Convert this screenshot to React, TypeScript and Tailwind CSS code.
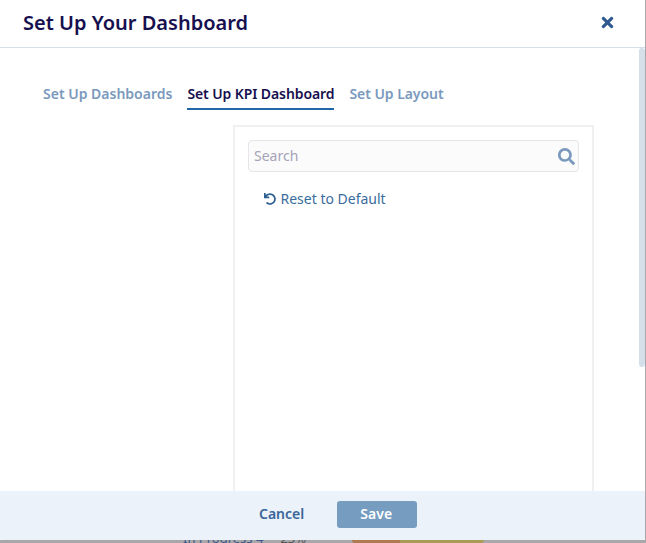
import React from 'react';
import { FaTimes, FaSearch, FaUndo } from 'react-icons/fa';

const font = "font-['Noto_Sans','Open_Sans',sans-serif]";

const App: React.FC = () => {
  return (
    <div className={`w-[646px] h-[543px] overflow-hidden bg-[#a9a7a9] flex flex-col ${font}`}>
      <div className="w-[645px] h-[540px] shrink-0 bg-white flex flex-col">
        <div className="h-[48px] shrink-0 border-b border-[#d5dfea] flex items-center justify-between pl-[23px] pr-[29px] pb-[2px]">
          <h1 className="text-[20px] font-semibold leading-[44px] text-[#17104f]">Set Up Your Dashboard</h1>
          <FaTimes size={17} className="text-[#30598f]" />
        </div>

        <div className="flex-1 min-h-0 flex overflow-hidden">
          <div className="flex-1 min-w-0 flex flex-col pl-[43px]">
            <div className="flex items-start gap-[15px] mt-[33px] h-[44px] shrink-0 text-[14px] font-semibold">
              <span className="text-[#7a99bd] leading-[26px]">Set Up Dashboards</span>
              <span className="text-[#17104f] leading-[25px] h-[29px] border-b-2 border-[#2166a8] tracking-[-0.1px]">Set Up KPI Dashboard</span>
              <span className="text-[#7a99bd] leading-[26px] tracking-[-0.05px]">Set Up Layout</span>
            </div>
            <div className="ml-[190px] w-[361px] flex-1 border-x-2 border-t-2 border-[#f0f0f2] pt-[13px] px-[13px]">
              <div className="h-[32px] flex items-center justify-between rounded-[4px] border border-[#e6e6ea] bg-[#fbfbfb] pl-[5px] pr-[3px]">
                <span className="text-[14px] leading-[28px] text-[#a5a3b8]">Search</span>
                <FaSearch size={17} className="text-[#7a99bd]" />
              </div>
              <div className="flex items-center gap-[5px] mt-[17px] ml-[15px] text-[14px] leading-[20px] text-[#3a6c9e]">
                <FaUndo size={12} className="text-[#2d5f92] ml-[1px]" />
                <span className="-ml-[0.5px]">Reset to Default</span>
              </div>
            </div>
          </div>
          <div className="w-[6px] shrink-0">
            <div className="h-[319px] w-[6px] rounded-[3px] bg-[#d5dfea]" />
          </div>
        </div>

        <div className="h-[49px] shrink-0 bg-[#ebf2fa] rounded-b-[2px] flex items-center pl-[259px] gap-[33px] pb-[2px]">
          <span className="text-[14px] font-semibold leading-[20px] pb-[2px] text-[#39659b]">Cancel</span>
          <button className="w-[80px] h-[27px] rounded-[3px] bg-[#769cc0] text-white text-[14px] font-semibold leading-[20px] pb-[2px] pr-[2px]">Save</button>
        </div>
      </div>

      {/* page behind the modal, only its last few pixels show */}
      <div className="h-[3px] overflow-hidden flex items-start pl-[183px]">
        <span className="text-[13px] leading-[13px] -mt-[8px] text-[#3f5a88]">In Progress 4</span>
        <span className="text-[13px] leading-[13px] -mt-[8px] ml-[17px] text-[#555]">23%</span>
        <div className="ml-[46px] w-[48px] h-[3px] rounded-bl-[3px] bg-[#b07a50]" />
        <div className="w-[84px] h-[3px] rounded-br-[3px] bg-[#aa9c58]" />
      </div>
    </div>
  );
};

export default App;
